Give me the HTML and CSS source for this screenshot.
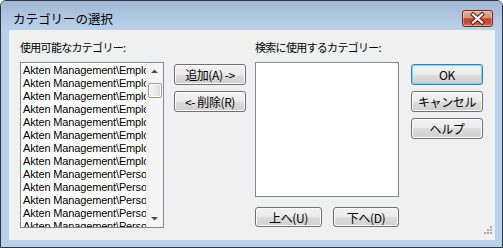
FILE: index.html
```html
<!DOCTYPE html>
<html lang="ja">
<head>
<meta charset="utf-8">
<title>カテゴリーの選択</title>
<link rel="stylesheet" href="styles.css">
</head>
<body>
<div class="window">
  <div class="titlebar">
    <span class="title">カテゴリーの選択</span>
    <button class="close" aria-label="閉じる">
      <svg width="31" height="17" viewBox="0 0 31 17">
        <path d="M11 4.5 L20 12.5 M20 4.5 L11 12.5" stroke="#5b2218" stroke-width="4.2" stroke-linecap="square" fill="none"/>
        <path d="M11 4.5 L20 12.5 M20 4.5 L11 12.5" stroke="#ffffff" stroke-width="2.2" stroke-linecap="square" fill="none"/>
      </svg>
    </button>
  </div>
  <div class="client">
    <div class="col col-avail">
      <div class="label">使用可能なカテゴリー:</div>
      <div class="listbox listbox-avail">
        <ul class="items">
          <li>Akten Management\Employees</li>
          <li>Akten Management\Employees</li>
          <li>Akten Management\Employees</li>
          <li>Akten Management\Employees</li>
          <li>Akten Management\Employees</li>
          <li>Akten Management\Employees</li>
          <li>Akten Management\Employees</li>
          <li>Akten Management\Employees</li>
          <li>Akten Management\Personal</li>
          <li>Akten Management\Personal</li>
          <li>Akten Management\Personal</li>
          <li>Akten Management\Personal</li>
          <li>Akten Management\Personal</li>
        </ul>
        <div class="vscroll">
          <div class="arrow">
            <svg width="17" height="17" viewBox="0 0 17 17"><path d="M5 10 L8.5 6.5 L12 10 Z" fill="#4d4d4d"/></svg>
          </div>
          <div class="track"><div class="thumb"></div></div>
          <div class="arrow">
            <svg width="17" height="17" viewBox="0 0 17 17"><path d="M5 7 L8.5 10.5 L12 7 Z" fill="#4d4d4d"/></svg>
          </div>
        </div>
      </div>
    </div>
    <div class="col col-move">
      <button class="btn">追加(A) -&gt;</button>
      <button class="btn">&lt;- 削除(R)</button>
    </div>
    <div class="col col-sel">
      <div class="label">検索に使用するカテゴリー:</div>
      <div class="listbox listbox-sel"></div>
      <div class="order-row">
        <button class="btn btn-up">上へ(U)</button>
        <button class="btn btn-down">下へ(D)</button>
      </div>
    </div>
    <div class="col col-actions">
      <button class="btn default">OK</button>
      <button class="btn">キャンセル</button>
      <button class="btn">ヘルプ</button>
    </div>
    <div class="grip">
      <svg width="12" height="12" viewBox="0 0 12 12">
        <rect x="9" y="0" width="2" height="2" fill="#a9a9a9"/>
        <rect x="6" y="3" width="2" height="2" fill="#a9a9a9"/>
        <rect x="9" y="3" width="2" height="2" fill="#a9a9a9"/>
        <rect x="3" y="6" width="2" height="2" fill="#a9a9a9"/>
        <rect x="6" y="6" width="2" height="2" fill="#a9a9a9"/>
        <rect x="9" y="6" width="2" height="2" fill="#a9a9a9"/>
      </svg>
    </div>
  </div>
</div>
</body>
</html>
```
FILE: styles.css
```css
html, body {
  margin: 0;
  padding: 0;
}
body {
  width: 503px;
  height: 248px;
  overflow: hidden;
  background: #ffffff;
  font-family: "Noto Sans CJK JP", sans-serif;
  color: #000;
}
.window {
  box-sizing: border-box;
  width: 503px;
  height: 248px;
  border: 1px solid #2f3640;
  border-radius: 6px 6px 0 0;
  background: #b9d1ea;
  display: flex;
  flex-direction: column;
}
.titlebar {
  flex: none;
  height: 29px;
  display: flex;
  align-items: flex-start;
  justify-content: space-between;
  background: linear-gradient(#a1b8d2, #b3cbe5 70%, #b9d1ea);
  border-radius: 5px 5px 0 0;
}
.title {
  font-size: 12.5px;
  line-height: 14px;
  margin: 11px 0 0 12px;
}
.close {
  box-sizing: border-box;
  width: 31px;
  height: 17px;
  margin: 9px 9px 0 0;
  padding: 0;
  border: 1px solid #6e2a22;
  border-radius: 3px;
  background: linear-gradient(#e9ab9a 0%, #dd8d76 45%, #c4452c 52%, #c74a30 75%, #dc7356 100%);
  box-shadow: inset 0 0 0 1px rgba(255, 255, 255, 0.35);
  display: flex;
  align-items: center;
  justify-content: center;
}
.close svg {
  display: block;
  margin: -1px;
}
.client {
  flex: 1;
  position: relative;
  margin: 0 7px 7px 8px;
  background: #f0f0f0;
  display: flex;
  align-items: flex-start;
}
.col {
  flex: none;
  display: flex;
  flex-direction: column;
}
.col-avail {
  margin-left: 11px;
  width: 144px;
  padding-top: 10px;
}
.col-move {
  margin-left: 10px;
  width: 72px;
  padding-top: 34px;
}
.col-sel {
  margin-left: 9px;
  width: 144px;
  padding-top: 10px;
}
.col-actions {
  margin-left: 12px;
  width: 72px;
  padding-top: 34px;
}
.label {
  font-size: 11px;
  line-height: 14px;
  height: 14px;
  margin-bottom: 8px;
  letter-spacing: -0.7px;
  white-space: nowrap;
}
.listbox {
  box-sizing: border-box;
  border: 1px solid #828790;
  background: #ffffff;
}
.listbox-avail {
  height: 166px;
  display: flex;
  overflow: hidden;
}
.listbox-sel {
  height: 135px;
}
.items {
  flex: 1;
  min-width: 0;
  margin: 0;
  padding: 1px 0 0 2px;
  list-style: none;
  overflow: hidden;
  font-family: "Liberation Sans", Arial, sans-serif;
  font-size: 11px;
  line-height: 13px;
  letter-spacing: -0.15px;
}
.items li {
  white-space: nowrap;
  overflow: hidden;
}
.vscroll {
  flex: none;
  width: 17px;
  display: flex;
  flex-direction: column;
  background: linear-gradient(to right, #ebebeb, #f5f5f5 25%, #f7f7f7);
}
.arrow {
  flex: none;
  height: 17px;
}
.arrow svg {
  display: block;
}
.track {
  flex: 1;
}
.thumb {
  box-sizing: border-box;
  margin: 3px 1px 0 2px;
  height: 15px;
  border: 1px solid #9a9a9a;
  border-radius: 2px;
  background: linear-gradient(to right, #f6f6f6, #e9e9e9 50%, #d8d8d8);
  box-shadow: inset 0 0 0 1px #fbfbfb;
}
.btn {
  box-sizing: border-box;
  height: 21px;
  margin: 0 0 6px 0;
  padding: 0;
  border: 1px solid #707070;
  border-radius: 3px;
  background: linear-gradient(#f2f2f2 0%, #ebebeb 50%, #dddddd 50%, #cfcfcf 100%);
  box-shadow: inset 0 0 0 1px #fbfbfb;
  font-family: "Noto Sans CJK JP", sans-serif;
  font-size: 12px;
  line-height: 17px;
  color: #000;
  letter-spacing: -0.4px;
  white-space: nowrap;
}
.btn.default {
  border-color: #3c7fb1;
  box-shadow: inset 0 0 0 1px #7fd3f5;
}
.order-row {
  display: flex;
  gap: 11px;
  margin-top: 10px;
}
.order-row .btn {
  height: 20px;
  margin: 0;
}
.btn-up {
  width: 67px;
}
.btn-down {
  width: 66px;
}
.grip {
  position: absolute;
  right: 2px;
  bottom: 2px;
  width: 12px;
  height: 12px;
}
.grip svg {
  display: block;
}
```
